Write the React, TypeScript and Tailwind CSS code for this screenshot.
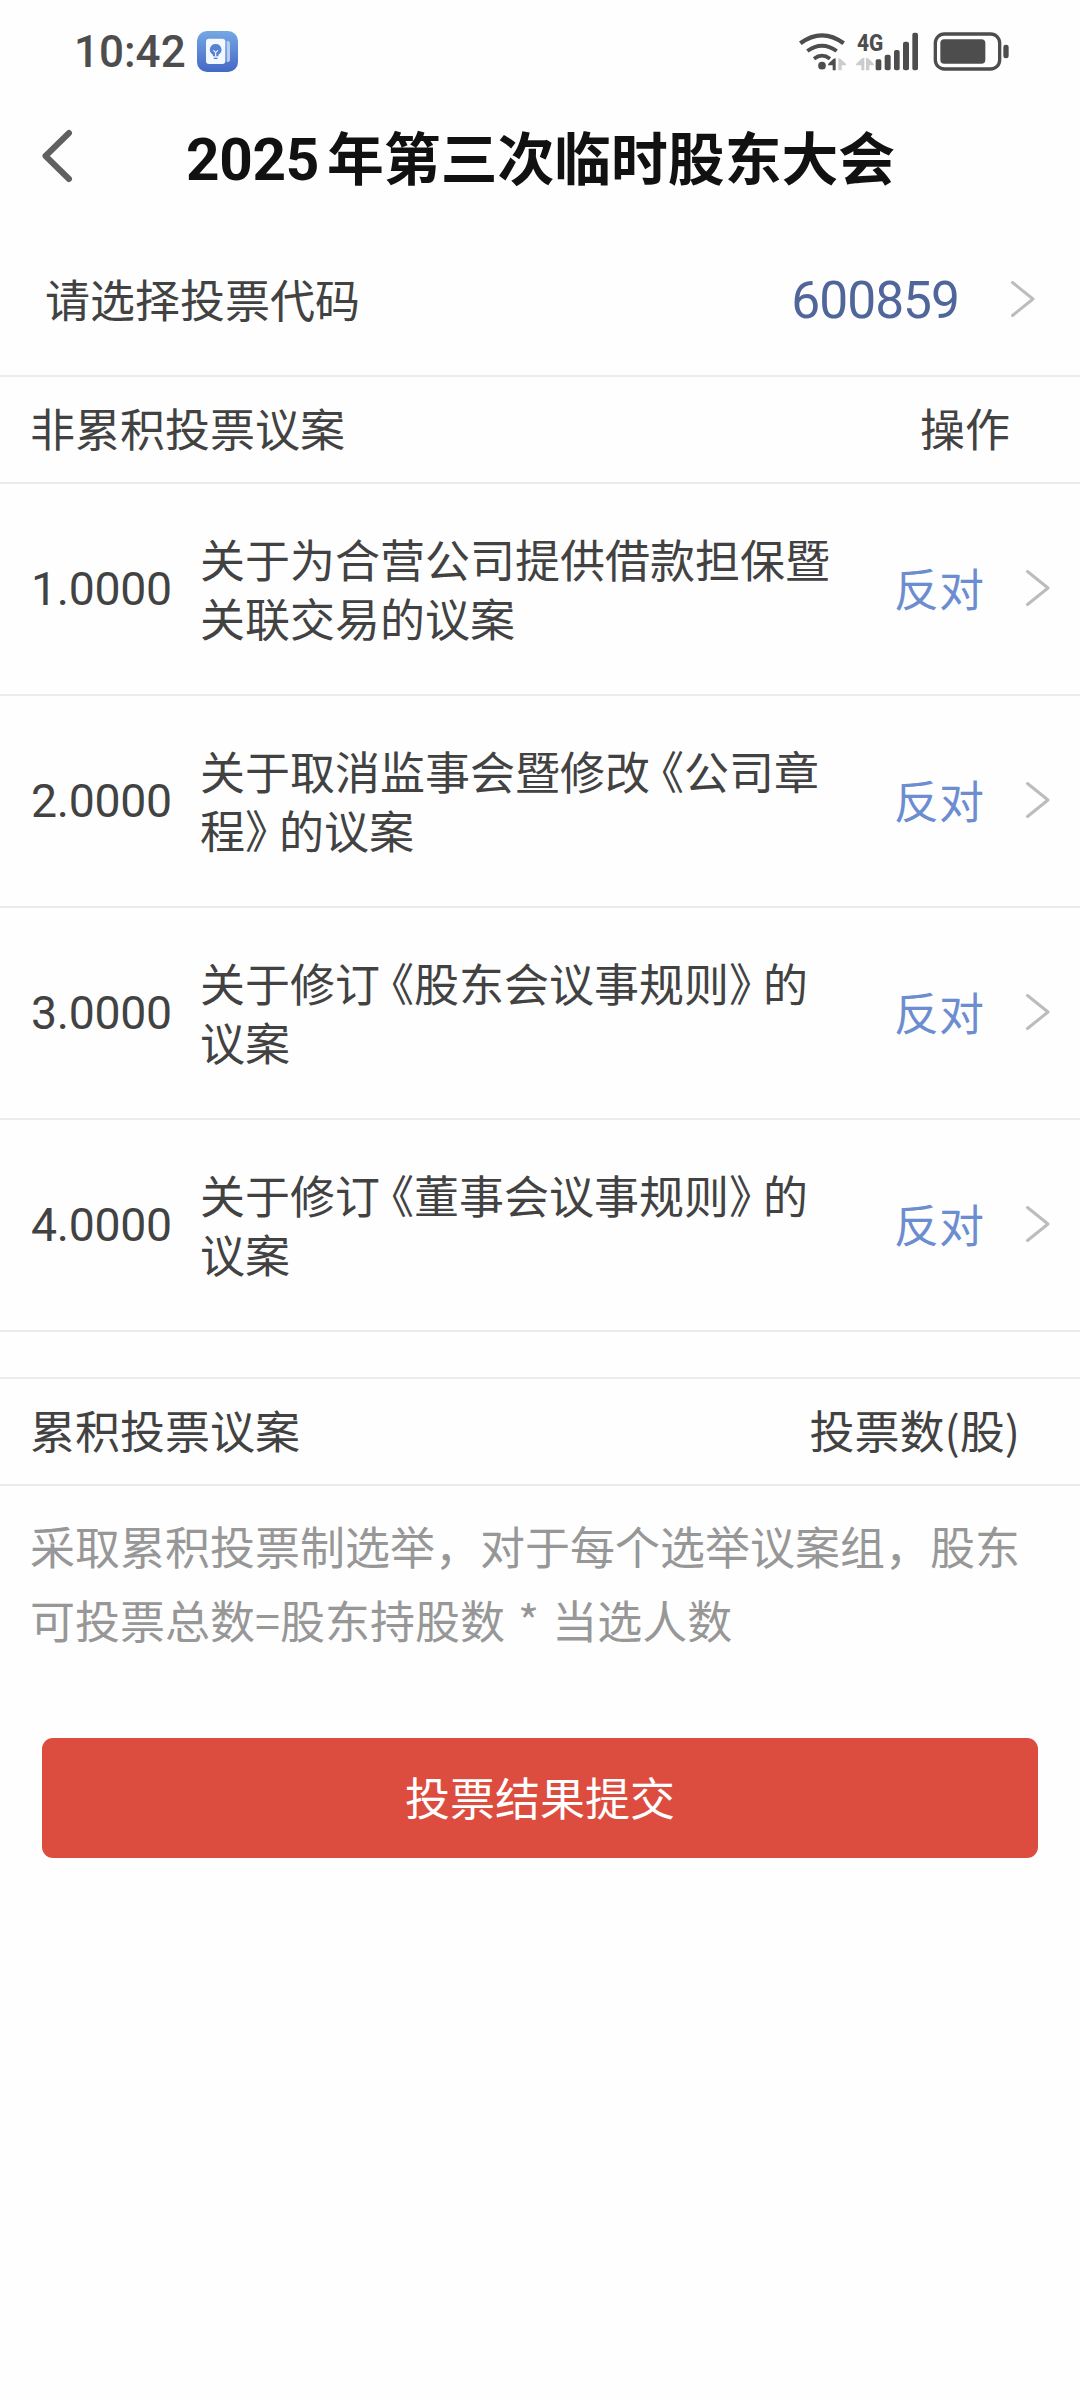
import React from 'react';

interface Proposal {
  no: string;
  lines: string[];
  vote: string;
}

const proposals: Proposal[] = [
  { no: '1.0000', lines: ['关于为合营公司提供借款担保暨', '关联交易的议案'], vote: '反对' },
  { no: '2.0000', lines: ['关于取消监事会暨修改《公司章', '程》的议案'], vote: '反对' },
  { no: '3.0000', lines: ['关于修订《股东会议事规则》的', '议案'], vote: '反对' },
  { no: '4.0000', lines: ['关于修订《董事会议事规则》的', '议案'], vote: '反对' },
];

// Book title marks are set half width, with a little air on the outer side
const renderLine = (line: string) =>
  line.split(/([《》])/).map((part, i) => {
    if (part === '《') return <span key={i} className="ml-[11.5px] [font-feature-settings:'halt']">{part}</span>;
    if (part === '》') return <span key={i} className="mr-[11.5px] [font-feature-settings:'halt']">{part}</span>;
    return part;
  });

const Chevron: React.FC = () => (
  <svg className="h-[38px] w-[26px] shrink-0" viewBox="0 0 26 38" fill="none">
    <path d="M2.5 2.5L23 19L2.5 35.5" stroke="#bcbcbc" strokeWidth="3" strokeLinecap="round" strokeLinejoin="round" />
  </svg>
);

const NotesAppIcon: React.FC = () => (
  <svg className="h-[41px] w-[41px]" viewBox="0 0 123 123">
    <defs>
      <linearGradient id="notes" x1="0" y1="0" x2="0" y2="1">
        <stop offset="0" stopColor="#74a8e4" />
        <stop offset="1" stopColor="#4468c6" />
      </linearGradient>
    </defs>
    <rect width="123" height="123" rx="30" fill="url(#notes)" />
    <path d="M89 30h3q7 0 7 8v47q0 8-7 8h-3z" fill="#b9cdf0" />
    <rect x="27" y="23" width="58" height="76" rx="9" fill="#f3f7fe" />
    <path d="M56 39a17 17 0 0 1 10 31q-2 2-2 6H48q0-4-2-6A17 17 0 0 1 56 39z" fill="#5583d2" />
    <path d="M49 80h14l-3 4h-8z" fill="#4a74cc" />
    <path d="M49 58l7 6l7-6M56 64v11" stroke="#f3f7fe" strokeWidth="3.5" fill="none" />
  </svg>
);

const WifiIcon: React.FC = () => (
  <svg className="h-[40px] w-[48px]" viewBox="54 60 144 120" fill="none">
    <path d="M61 97Q93 73 126 73T191 97" stroke="#4d4d4d" strokeWidth="13" />
    <path d="M82 120Q104 104 126 104T170 120" stroke="#4d4d4d" strokeWidth="12" />
    <path d="M102 143Q114 134 126 134T150 143" stroke="#4d4d4d" strokeWidth="11" />
    <circle cx="126" cy="164" r="11.5" fill="#4d4d4d" />
    <path d="M167 142v36h-9v-15h-14q0-4 3-7l13-12q3-2 7-2z" fill="#4d4d4d" />
    <path d="M175 142q5 0 8 3l13 12q3 3 3 6h-14v15h-10z" fill="#cccccc" />
  </svg>
);

const SignalIcon: React.FC = () => (
  <svg className="h-[40px] w-[64px] overflow-visible" viewBox="228 60 192 120">
    <text x="231" y="120" textLength="79" lengthAdjust="spacingAndGlyphs" fontSize="73" fontWeight="800" fill="#4d4d4d" className="font-['Roboto',sans-serif]">
      4G
    </text>
    <path d="M253 140v38h-9v-15h-16q0-4 3-7l13-12q4-4 9-4z" fill="#cccccc" />
    <path d="M258 140q6 1 9 4l12 12q3 3 3 7h-14v15h-10z" fill="#cccccc" />
    <g fill="#4d4d4d">
      <rect x="287" y="145" width="17" height="33" rx="5" />
      <rect x="314" y="131" width="18" height="47" rx="6" />
      <rect x="342" y="117" width="17" height="61" rx="6" />
      <rect x="369" y="92" width="18" height="86" rx="6" />
      <rect x="397" y="65" width="17" height="113" rx="6" />
    </g>
  </svg>
);

const BatteryIcon: React.FC = () => (
  <svg className="h-[40px] w-[77px]" viewBox="459 60 231 120" fill="none">
    <rect x="466" y="69" width="193" height="105" rx="27" stroke="#4d4d4d" strokeWidth="10" />
    <rect x="481" y="85" width="135" height="73" rx="12" fill="#4d4d4d" />
    <rect x="670" y="101" width="16" height="41" rx="7" fill="#4d4d4d" />
  </svg>
);

const SectionHeader: React.FC<{ title: string; action: string; actionClass: string }> = ({ title, action, actionClass }) => (
  <div className="flex h-[109px] items-center justify-between border-y-2 border-[#ececec] pb-[4px] pl-[30px]">
    <span>{title}</span>
    <span className={actionClass}>{action}</span>
  </div>
);

const App: React.FC = () => {
  return (
    <div className="flex h-[2400px] w-[1080px] flex-col bg-[#fefefe] font-['Noto_Sans_CJK_SC',sans-serif] text-[45px] leading-[59px] whitespace-nowrap text-[#424242]">
      {/* Status bar */}
      <div className="flex h-[92px] shrink-0 items-center justify-between pt-[10px] pr-[70px] pl-[74px]">
        <div className="flex items-center">
          <span className="w-[123px] pt-[2px] font-['Roboto',sans-serif] text-[44px] font-medium text-[#4d4d4d]">10:42</span>
          <NotesAppIcon />
        </div>
        <div className="flex items-center">
          <WifiIcon />
          <div className="ml-[10px]">
            <SignalIcon />
          </div>
          <div className="ml-[13px]">
            <BatteryIcon />
          </div>
        </div>
      </div>

      {/* Title bar */}
      <header className="flex h-[133px] shrink-0 items-center pl-[41px] text-[#111111]">
        <svg className="mb-[5px] h-[54px] w-[34px]" viewBox="0 0 34 54" fill="none">
          <path d="M28 4L4.5 27L28 50" stroke="#606060" strokeWidth="6" strokeLinecap="round" strokeLinejoin="round" />
        </svg>
        <h1 className="ml-[111px] flex items-baseline pb-[3px] text-[56.8px] leading-[80px] font-bold">
          <span className="mr-[8px] font-['Roboto',sans-serif] text-[58.5px] tracking-[-0.3px]">2025</span>
          年第三次临时股东大会
        </h1>
      </header>

      {/* Vote code selector */}
      <div className="flex h-[150px] shrink-0 items-center pr-[44px] pl-[45px]">
        <span className="flex-1 pb-[4px]">请选择投票代码</span>
        <span className="mr-[51px] font-['Roboto',sans-serif] text-[51.5px] tracking-[-1px] text-[#50659a]">600859</span>
        <div className="pb-[3px]">
          <Chevron />
        </div>
      </div>

      <SectionHeader title="非累积投票议案" action="操作" actionClass="pr-[70px]" />

      {proposals.map(item => (
        <div key={item.no} className="flex h-[212px] shrink-0 items-center border-b-2 border-[#ececec] pr-[29px] pl-[31px]">
          <span className="w-[169px] pt-px font-['Roboto',sans-serif] text-[46.4px] tracking-[-0.3px]">{item.no}</span>
          <div className="flex-1 pb-[3px]">
            {item.lines.map(line => (
              <p key={line}>{renderLine(line)}</p>
            ))}
          </div>
          <span className="mr-[41px] pb-[4px] text-[#6c8dd0]">{item.vote}</span>
          <div className="pb-[3px]">
            <Chevron />
          </div>
        </div>
      ))}

      <div className="mt-[45px]">
        <SectionHeader title="累积投票议案" action="投票数(股)" actionClass="pr-[60px]" />
      </div>

      <div className="pt-[23px] pl-[30px] leading-[74px] [word-spacing:3px] text-[#979797]">
        <p>采取累积投票制选举，对于每个选举议案组，股东</p>
        <p>可投票总数=股东持股数 * 当选人数</p>
      </div>

      <button className="mx-[42px] mt-[81px] h-[120px] shrink-0 rounded-[11px] bg-[#dc4d3f] pb-[4px] text-white">投票结果提交</button>
    </div>
  );
};

export default App;
